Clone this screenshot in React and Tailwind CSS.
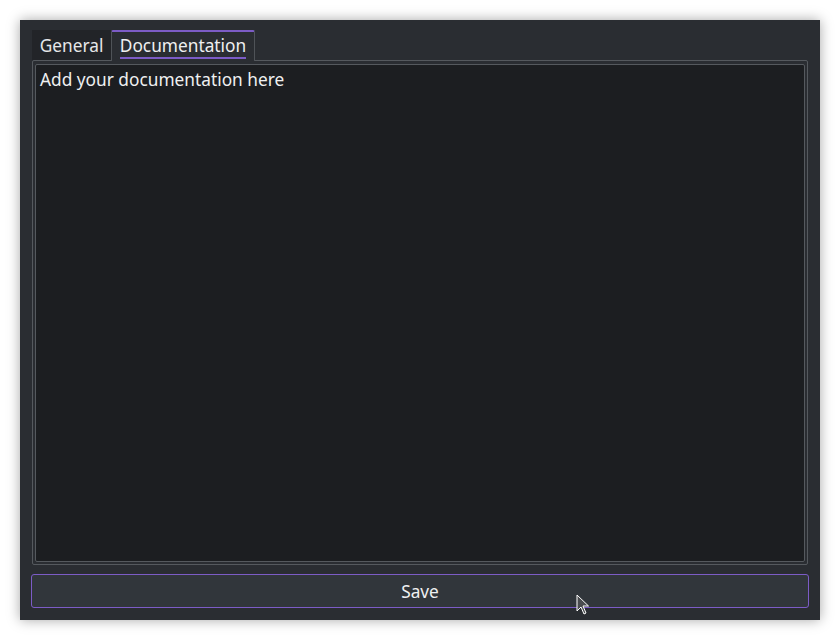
import { useState } from 'react';

export default function App() {
  const [tab, setTab] = useState('docs');
  const [text, setText] = useState('');

  const tabClass = (active) =>
    active
      ? 'h-[31px] bg-[#2a2d32] border border-b-0 border-[#4f5358] border-t-2 border-t-[#7c5cc6] rounded-t-[2px] text-[#eff0f1] z-10 flex justify-center pt-[2px]'
      : 'h-[30px] bg-[#222428] text-[#e6e7e8] flex justify-center pt-[4px]';

  return (
    <div
      className="w-[840px] h-[640px] bg-white flex items-center justify-center"
      style={{ fontFamily: '"Noto Sans", "Open Sans", sans-serif' }}
    >
      <div className="relative w-[800px] h-[600px] bg-[#2a2d32] shadow-[0_0_12px_rgba(0,0,0,0.35)] flex flex-col pt-[10px] pb-[12px] px-[11px]">
        <div className="flex h-[30px] pl-px text-[17.3px]">
          <button onClick={() => setTab('general')} className={'w-[79px] ' + tabClass(tab === 'general')}>
            <span className={tab === 'general' ? 'border-b-2 border-[#7c5cc6] leading-[23px] h-[25px]' : 'leading-[23px]'}>
              General
            </span>
          </button>
          <button onClick={() => setTab('docs')} className={'w-[144px] ' + tabClass(tab === 'docs')}>
            <span className={tab === 'docs' ? 'border-b-2 border-[#7c5cc6] leading-[23px] h-[25px]' : 'leading-[23px]'}>
              Documentation
            </span>
          </button>
        </div>
        <div className="flex-1 ml-px mr-px border border-[#55595e] rounded-[2px] p-[2px] pt-[3px]">
          {tab === 'docs' ? (
            <textarea
              value={text}
              onChange={(e) => setText(e.target.value)}
              placeholder="Add your documentation here"
              className="w-full h-full resize-none bg-[#1c1e21] border border-[#55595e] rounded-[2px] px-[4px] py-[3px] text-[17.3px] leading-[24px] text-[#eff0f1] placeholder:text-[#eff0f1] outline-none"
            />
          ) : (
            <div className="w-full h-full bg-[#2a2d32]" />
          )}
        </div>
        <button className="mt-[9px] h-[34px] pt-px bg-[#31363b] border border-[#7c5cc6] rounded-[3px] text-[17.3px] text-[#eff0f1]">
          Save
        </button>
        <svg
          className="absolute left-[556px] top-[574px]"
          width="14"
          height="22"
          viewBox="0 0 14 22"
        >
          <path
            d="M1 1 L1 17 L5 13 L8 20 L10 19 L7 12 L12.5 12 Z"
            fill="#4a4c4f"
            stroke="#ffffff"
            strokeWidth="1"
            strokeLinejoin="round"
          />
        </svg>
      </div>
    </div>
  );
}
